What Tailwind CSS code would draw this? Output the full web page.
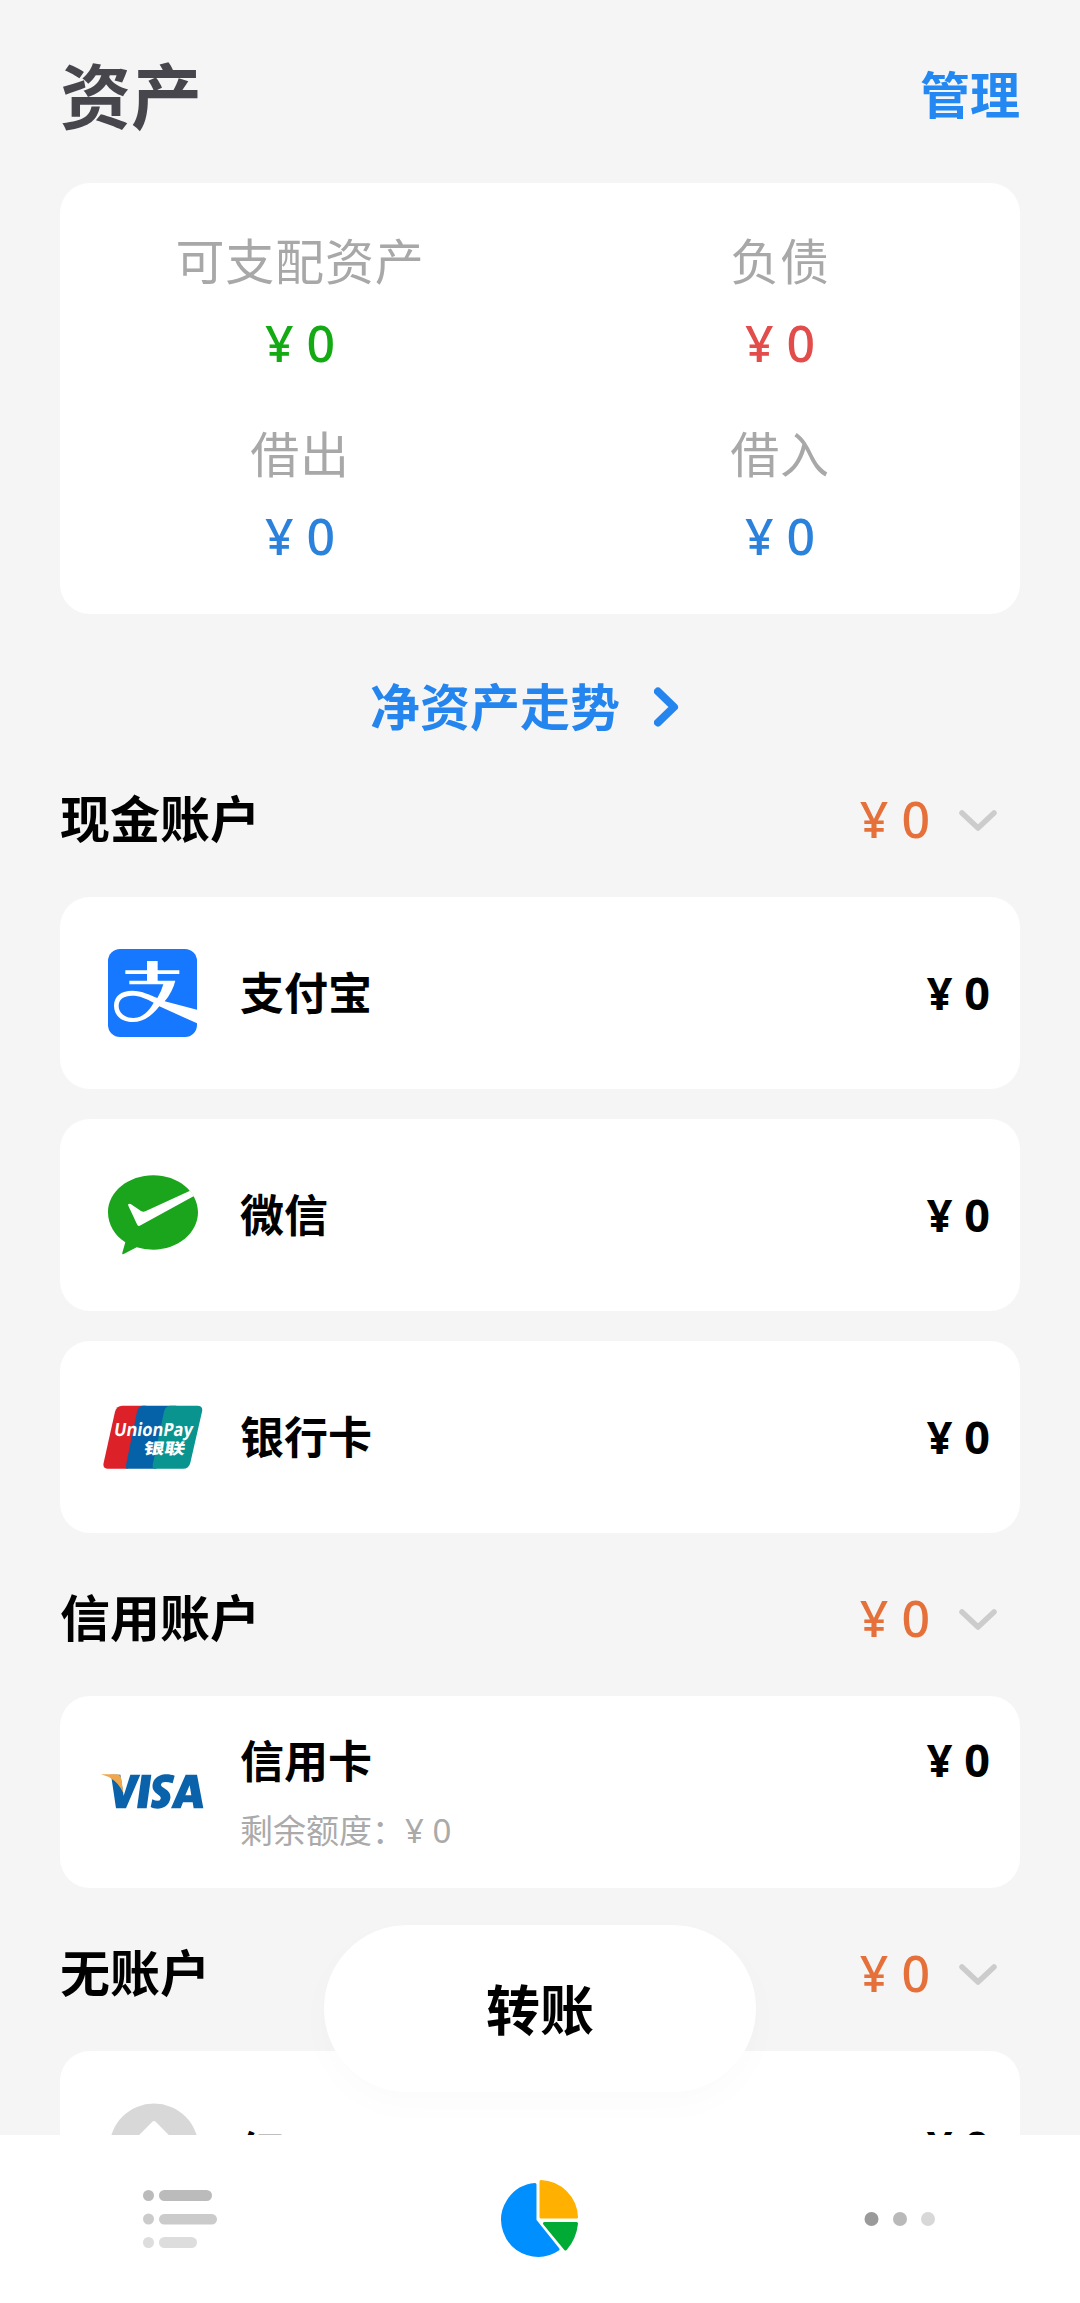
<!DOCTYPE html>
<html lang="zh-CN">
<head>
<meta charset="utf-8">
<title>资产</title>
<script src="https://cdn.jsdelivr.net/npm/@tailwindcss/browser@4"></script>
</head>
<body class="h-[2303px] w-[1080px] overflow-hidden bg-[#f5f5f5] font-['Noto_Sans_CJK_SC',sans-serif] text-black">
<div class="flex h-[2303px] flex-col">
  <main class="h-[2135px] shrink-0 overflow-hidden px-[60px]">
    <header class="flex h-[183px] items-center justify-between pt-[1px]">
      <h1 class="text-[71px] leading-none font-bold text-[#47464c]">资产</h1>
      <a class="text-[50px] leading-none font-bold text-[#2488f2]">管理</a>
    </header>
    <section class="grid h-[431px] grid-cols-2 content-start rounded-[30px] bg-white pt-[44px] text-center text-[49px] leading-[64px]">
      <div class="h-[193px]"><p class="tracking-[0.8px] text-[#a8a8a8]">可支配资产</p><p class="mt-[20px] font-['Noto_Sans'] text-[50px] font-medium text-[#14aa14]">¥ 0</p></div>
      <div class="h-[193px]"><p class="tracking-[0.8px] text-[#a8a8a8]">负债</p><p class="mt-[20px] font-['Noto_Sans'] text-[50px] font-medium text-[#e24c4a]">¥ 0</p></div>
      <div><p class="tracking-[0.8px] text-[#a8a8a8]">借出</p><p class="mt-[20px] font-['Noto_Sans'] text-[50px] font-medium text-[#2a82dc]">¥ 0</p></div>
      <div><p class="tracking-[0.8px] text-[#a8a8a8]">借入</p><p class="mt-[20px] font-['Noto_Sans'] text-[50px] font-medium text-[#2a82dc]">¥ 0</p></div>
    </section>
    <div class="flex h-[186px] items-center gap-[34px] pl-[310px]">
      <span class="-mt-[6px] text-[50px] leading-none font-bold text-[#2585ee]">净资产走势</span>
      <svg class="h-[40px] w-[26px]" viewBox="0 0 26 40" fill="none" stroke="#2585ee" stroke-width="8" stroke-linecap="round" stroke-linejoin="round"><path d="M4 4.500 20 20 4 35.500"/></svg>
    </div>
    <div class="flex h-[97px] justify-between pr-[23px]">
      <h2 class="-mt-[4px] text-[50px] leading-[40px] font-bold">现金账户</h2>
      <div class="-mt-[1px] flex h-[40px] items-center gap-[29px] font-['Noto_Sans'] text-[50px] leading-[40px] font-medium text-[#e5703a]">¥ 0<svg class="mt-[4px] h-[22px] w-[38px]" viewBox="0 0 38 22" fill="none" stroke="#ccc" stroke-width="5.5" stroke-linecap="round" stroke-linejoin="round"><path d="M3 3 19 18 35 3"/></svg></div>
    </div>
    <div class="flex flex-col gap-[30px]">
      <div class="flex h-[192px] items-center rounded-[30px] bg-white pr-[30px] pl-[48px]">
        <svg class="h-[88px] w-[89px]" viewBox="0 0 267 264"><rect width="267" height="264" rx="36" fill="#1677ff"/><path d="M52 64H117V36H149V64H214V75H149V95H202Q194 128 170 157L267 182V223L154 172Q118 219 74 219C36 219 18 196 18 170 18 140 42 125 72 125 102 125 128 139 148 147Q160 128 166 106H64V95H117V75H52ZM137 161C113 148 95 140 72 140 48 140 32 150 32 171 32 190 48 207 76 207 102 207 122 188 137 161Z" fill="#fff"/></svg>
        <span class="-mt-[4px] ml-[43px] flex-1 text-[44px] leading-none font-bold">支付宝</span><span class="-mt-[1px] font-['Noto_Sans'] text-[45px] leading-none font-bold">¥ 0</span>
      </div>
      <div class="flex h-[192px] items-center rounded-[30px] bg-white pr-[30px] pl-[48px]">
        <svg class="h-[80px] w-[90px]" viewBox="0 0 270 240"><path d="M136 1C210 1 270 50 270 112S210 224 136 224Q108 224 86 217L47 237Q41 239 43 233L52 202C20 182 0 148 0 112 0 50 62 1 136 1Z" fill="#1aa51c"/><path d="M61 92Q58 84 68 87L99 108Q105 112 112 109L246 47L258 63L98 151Q90 156 87 148Z" fill="#fff"/></svg>
        <span class="-mt-[4px] ml-[42px] flex-1 text-[44px] leading-none font-bold">微信</span><span class="-mt-[1px] font-['Noto_Sans'] text-[45px] leading-none font-bold">¥ 0</span>
      </div>
      <div class="flex h-[192px] items-center rounded-[30px] bg-white pr-[30px] pl-[43px]">
        <svg class="h-[64px] w-[100px]" viewBox="0 0 300 192"><path d="M58 2H130L74 191H15Q-2 191 2 173L36 20Q41 2 58 2Z" fill="#dc2128"/><path d="M118 2H220L160 191H70Q68 185 70 175L102 20Q106 4 118 2Z" fill="#0562a8"/><path d="M200 2H283Q301 2 297 20L262 173Q258 191 240 191H152Q147 186 150 174L183 20Q187 4 200 2Z" fill="#0a948f"/><g fill="#fff"><text transform="translate(31 93) skewX(-9)" font-family="Open Sans" font-weight="700" font-size="55" textLength="236" lengthAdjust="spacingAndGlyphs">UnionPay</text><text transform="translate(120 147) skewX(-9)" font-family="Noto Sans CJK SC" font-weight="900" font-size="46" textLength="124" lengthAdjust="spacingAndGlyphs">银联</text></g></svg>
        <span class="-mt-[4px] ml-[37px] flex-1 text-[44px] leading-none font-bold">银行卡</span><span class="-mt-[1px] font-['Noto_Sans'] text-[45px] leading-none font-bold">¥ 0</span>
      </div>
    </div>
    <div class="flex h-[163px] justify-between pt-[66px] pr-[23px]">
      <h2 class="-mt-[4px] text-[50px] leading-[40px] font-bold">信用账户</h2>
      <div class="-mt-[1px] flex h-[40px] items-center gap-[29px] font-['Noto_Sans'] text-[50px] leading-[40px] font-medium text-[#e5703a]">¥ 0<svg class="mt-[4px] h-[22px] w-[38px]" viewBox="0 0 38 22" fill="none" stroke="#ccc" stroke-width="5.5" stroke-linecap="round" stroke-linejoin="round"><path d="M3 3 19 18 35 3"/></svg></div>
    </div>
    <div class="flex h-[192px] rounded-[30px] bg-white pr-[30px] pl-[41px]">
      <svg class="mt-[77px] h-[38px] w-[104px]" viewBox="0 0 312 114"><path d="M30 5H58L68 68 88 5H118L75 106H45Z" fill="#0a62ab"/><path d="M0 4H46Q59 4 61 18L67 60Q48 16 0 4Z" fill="#f0a64b"/><g fill="#0a62ab"><path d="M122 5H151L137 106H108Z"/><path d="M221 8 215 31Q184 21 180 34C178 46 212 48 208 76 203 109 166 112 149 102L154 79Q175 89 179 77C183 64 150 62 155 34 160 4 195-2 221 8Z"/><path fill-rule="evenodd" d="M254 5H288L307 106H278L275 88H246L239 106H210ZM266 37 253 67H271Z"/></g></svg>
      <div class="ml-[35px] flex flex-1 flex-col"><span class="mt-[41px] text-[44px] leading-[44px] font-bold">信用卡</span><span class="mt-[32px] text-[33px] leading-[33px] text-[#aaa]">剩余额度：<span class="font-['Noto_Sans']">¥ 0</span></span></div>
      <span class="mt-[43px] font-['Noto_Sans'] text-[45px] leading-[42px] font-bold">¥ 0</span>
    </div>
    <div class="flex h-[163px] justify-between pt-[66px] pr-[23px]">
      <h2 class="-mt-[4px] text-[50px] leading-[40px] font-bold">无账户</h2>
      <div class="-mt-[1px] flex h-[40px] items-center gap-[29px] font-['Noto_Sans'] text-[50px] leading-[40px] font-medium text-[#e5703a]">¥ 0<svg class="mt-[4px] h-[22px] w-[38px]" viewBox="0 0 38 22" fill="none" stroke="#ccc" stroke-width="5.5" stroke-linecap="round" stroke-linejoin="round"><path d="M3 3 19 18 35 3"/></svg></div>
    </div>
    <div class="flex h-[192px] items-center rounded-[30px] bg-white pr-[30px] pl-[49px]">
      <svg class="h-[90px] w-[90px]" viewBox="0 0 90 90"><circle cx="45" cy="46" r="44.500" fill="#d8d8d8"/><path d="M45 21 72 48H58V70H32V48H18Z" fill="#fff" stroke="#fff" stroke-width="4" stroke-linejoin="round"/></svg>
      <span class="mt-[5px] ml-[41px] flex-1 text-[44px] leading-none font-bold">红</span><span class="-mt-[1px] font-['Noto_Sans'] text-[45px] leading-none font-bold">¥ 0</span>
    </div>
  </main>
  <nav class="relative grid h-[168px] shrink-0 grid-cols-3 bg-white">
    <svg class="h-[168px] w-[360px]" viewBox="0 0 360 168"><g fill="#bbb"><circle cx="148.500" cy="60.500" r="5.500"/><rect x="159" y="55" width="53" height="11" rx="5.500"/></g><g fill="#cbcbcb"><circle cx="148.500" cy="84" r="5.500"/><rect x="159" y="79" width="58" height="10.500" rx="5.200"/></g><g fill="#ddd"><circle cx="148.500" cy="107.500" r="5.500"/><rect x="159" y="102" width="38" height="11" rx="5.500"/></g></svg>
    <svg class="h-[168px] w-[360px]" viewBox="0 0 360 168" stroke-width="3" stroke-linejoin="round"><path d="M175 49.500A35.500 35.500 0 1 0 198 114.300L175 85.500Z" fill="#008fff" stroke="#008fff"/><path d="M181 46.500A37 37 0 0 1 216.500 82H181Z" fill="#ffb000" stroke="#ffb000"/><path d="M184.500 88.500H216.500Q215 103 205.500 114Z" fill="#00ab35" stroke="#00ab35"/></svg>
    <svg class="h-[168px] w-[360px]" viewBox="0 0 360 168"><circle cx="151.500" cy="84" r="7" fill="#9a9a9a"/><circle cx="180" cy="84" r="7" fill="#b9b9b9"/><circle cx="208" cy="84" r="7" fill="#d8d8d8"/></svg>
    <button class="absolute -top-[210px] left-[324px] h-[167px] w-[432px] rounded-full bg-white pb-[2px] text-[54px] leading-none font-bold shadow-[0_12px_36px_rgba(0,0,0,0.02)]">转账</button>
  </nav>
</div>
</body>
</html>
